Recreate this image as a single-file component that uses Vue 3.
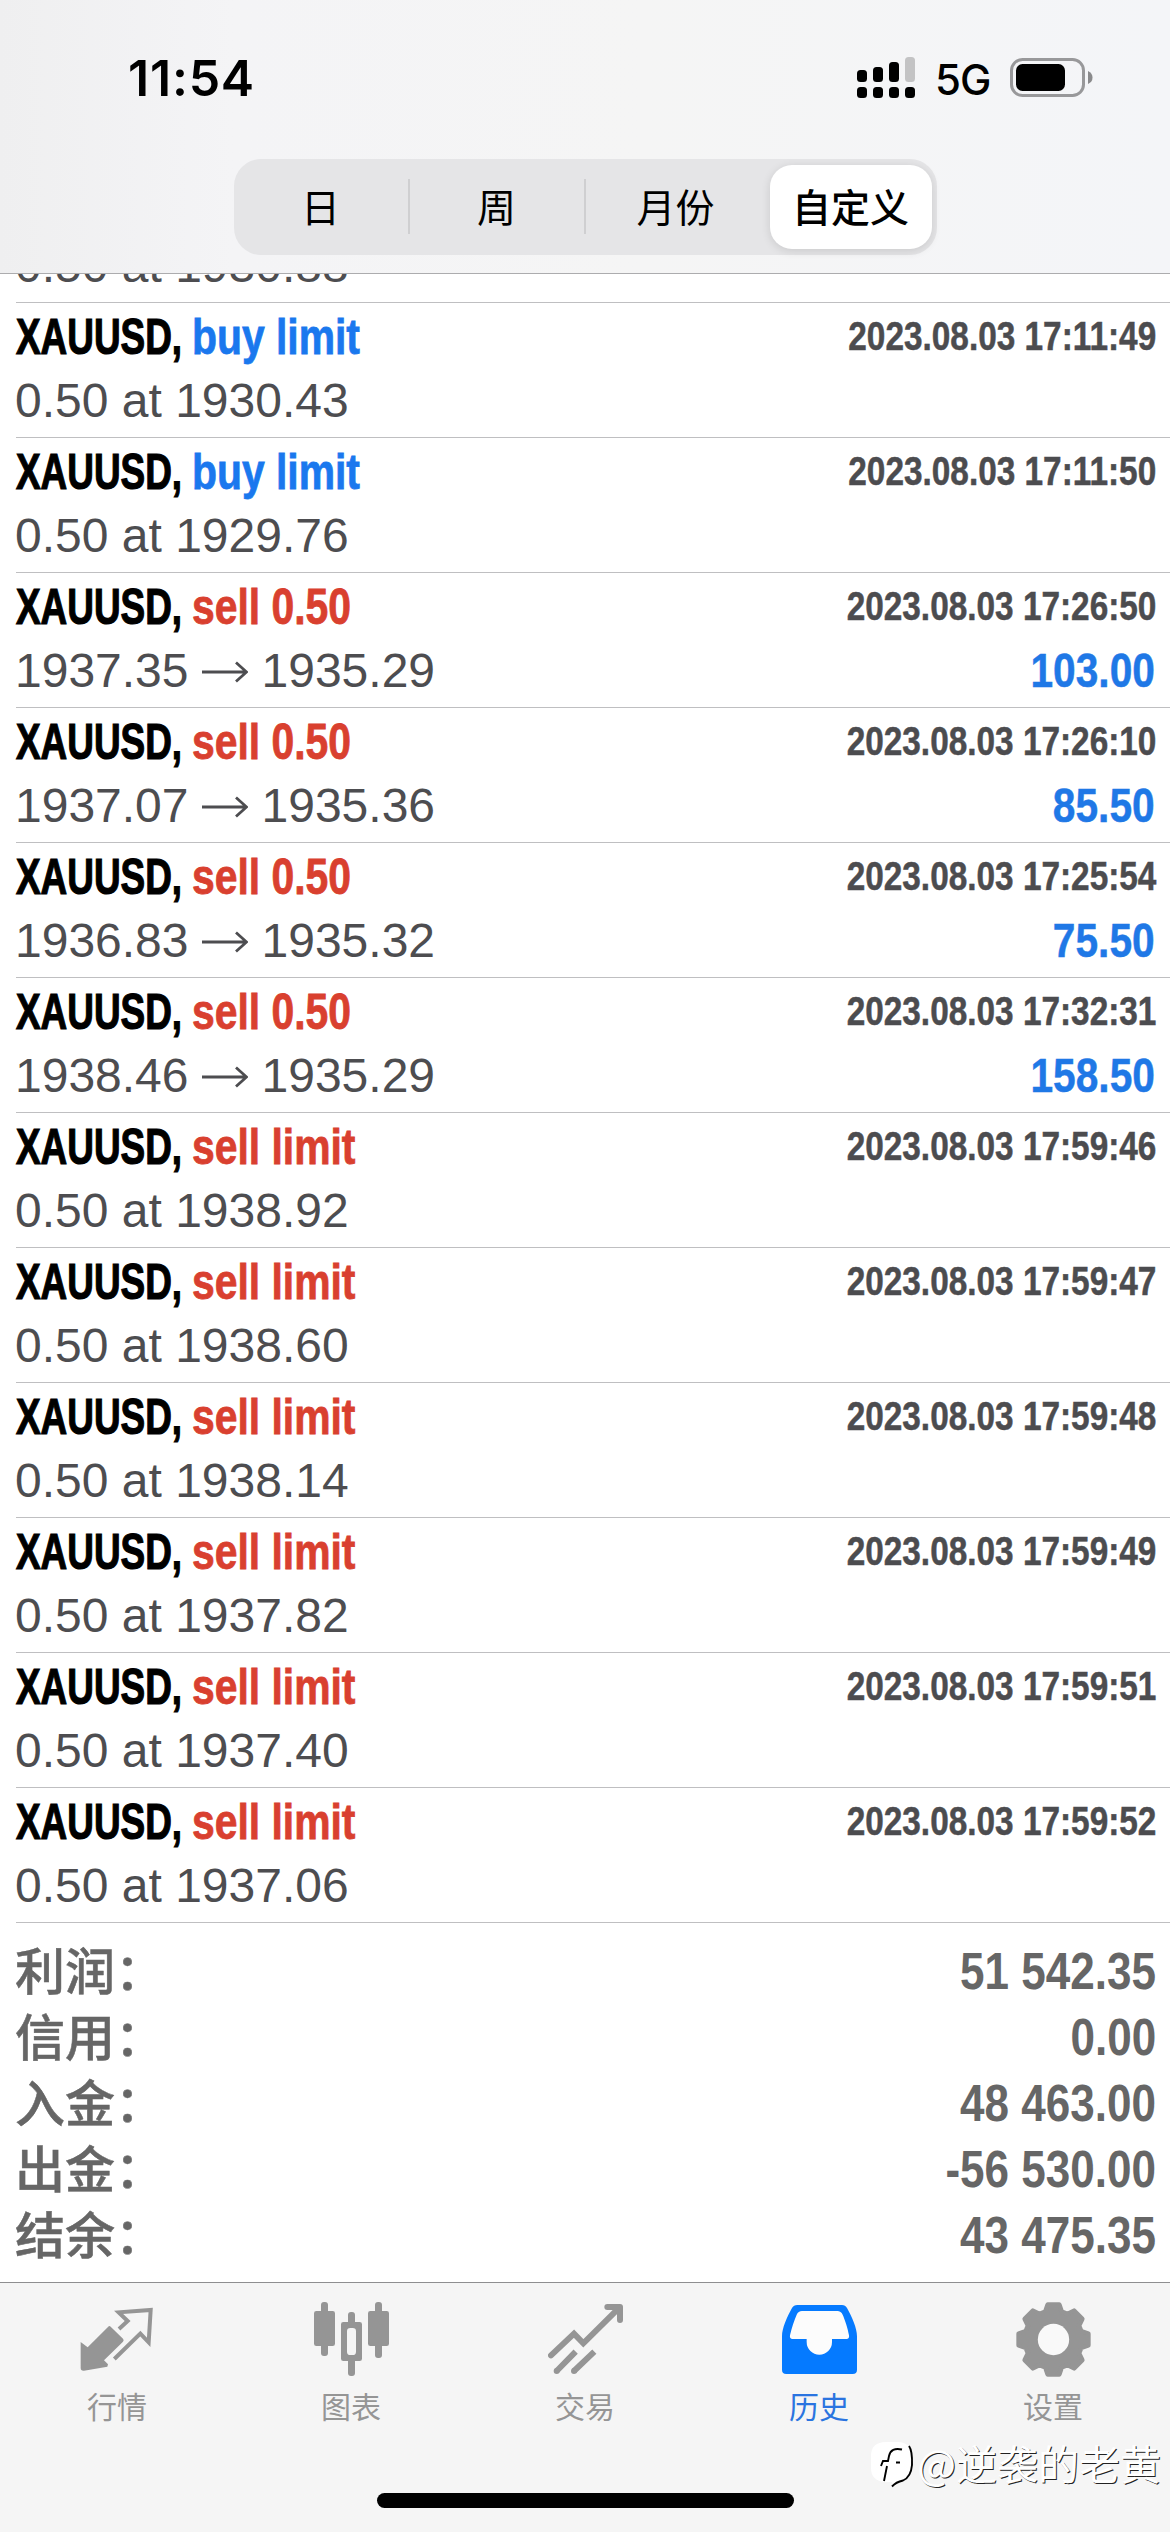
<script setup>
const periods = ['日', '周', '月份', '自定义']
const activePeriod = 3

const deals = [
  { type: 'buy limit', detail: '0.50 at 1930.88', time: '2023.08.03 17:11:48' },
  { type: 'buy limit', detail: '0.50 at 1930.43', time: '2023.08.03 17:11:49' },
  { type: 'buy limit', detail: '0.50 at 1929.76', time: '2023.08.03 17:11:50' },
  { type: 'sell 0.50', open: '1937.35', close: '1935.29', time: '2023.08.03 17:26:50', profit: '103.00' },
  { type: 'sell 0.50', open: '1937.07', close: '1935.36', time: '2023.08.03 17:26:10', profit: '85.50' },
  { type: 'sell 0.50', open: '1936.83', close: '1935.32', time: '2023.08.03 17:25:54', profit: '75.50' },
  { type: 'sell 0.50', open: '1938.46', close: '1935.29', time: '2023.08.03 17:32:31', profit: '158.50' },
  { type: 'sell limit', detail: '0.50 at 1938.92', time: '2023.08.03 17:59:46' },
  { type: 'sell limit', detail: '0.50 at 1938.60', time: '2023.08.03 17:59:47' },
  { type: 'sell limit', detail: '0.50 at 1938.14', time: '2023.08.03 17:59:48' },
  { type: 'sell limit', detail: '0.50 at 1937.82', time: '2023.08.03 17:59:49' },
  { type: 'sell limit', detail: '0.50 at 1937.40', time: '2023.08.03 17:59:51' },
  { type: 'sell limit', detail: '0.50 at 1937.06', time: '2023.08.03 17:59:52' },
]

const totals = [
  ['利润：', '51 542.35'],
  ['信用：', '0.00'],
  ['入金：', '48 463.00'],
  ['出金：', '-56 530.00'],
  ['结余：', '43 475.35'],
]

// Eight-tooth gear outline around (112.5, 112.5)
const gear = Array.from({ length: 8 }, (_, i) =>
  [[-16.5, 87], [-9.5, 106], [9.5, 106], [16.5, 87]].map(([a, r]) => {
    const t = ((i * 45 + a) * Math.PI) / 180
    return `${(112.5 + r * Math.sin(t)).toFixed(1)},${(112.5 - r * Math.cos(t)).toFixed(1)}`
  }).join(' ')
).join(' ')
</script>

<template>
  <div class="screen">
    <header class="header">
      <div class="status">
        <span class="clock">11:54</span>
        <div class="status-right">
          <svg class="signal" width="58" height="42" viewBox="0 0 58 42">
            <rect x="0" y="13" width="10" height="12" rx="3.5" />
            <rect x="16" y="10" width="10" height="15" rx="3.5" />
            <rect x="32" y="5" width="10" height="20" rx="3.5" />
            <rect x="48" y="0" width="10" height="25" rx="3.5" fill="#c3c3c4" />
            <rect v-for="x in [0, 16, 32, 48]" :key="x" :x="x" y="30" width="10" height="11" rx="3.5" />
          </svg>
          <span class="network">5G</span>
          <svg class="battery" width="83" height="39" viewBox="0 0 83 39">
            <rect x="1.5" y="1.5" width="72" height="36" rx="11" fill="none" stroke="#98989a" stroke-width="3" />
            <rect x="6" y="6" width="49" height="27" rx="6.5" />
            <path d="M78 13q4.500 2 4.500 6.500T78 26z" fill="#8a8a8c" />
          </svg>
        </div>
      </div>
      <nav class="segments">
        <div v-for="(p, i) in periods" :key="p" class="segment" :class="{ active: i === activePeriod }">
          <span>{{ p }}</span>
        </div>
      </nav>
    </header>

    <main class="content">
      <ul class="deals">
        <li v-for="d in deals" :key="d.time" class="deal">
          <div class="line top">
            <span class="symbol"><b>XAUUSD,</b></span>
            <span class="type" :class="d.type.slice(0, 4).trim()">{{ d.type }}</span>
            <time class="time">{{ d.time }}</time>
          </div>
          <div class="line bottom">
            <span v-if="d.detail" class="prices">{{ d.detail }}</span>
            <span v-else class="prices">
              <span>{{ d.open }}</span>
              <svg class="arrow" width="46" height="22" viewBox="0 0 46 22">
                <path d="M0 11H44M34 1.500 44.500 11 34 20.500" fill="none" stroke="currentColor" stroke-width="2.800" />
              </svg>
              <span>{{ d.close }}</span>
            </span>
            <span v-if="d.profit" class="profit">{{ d.profit }}</span>
          </div>
        </li>
      </ul>
      <dl class="totals">
        <div v-for="[label, value] in totals" :key="label" class="total">
          <dt>{{ label }}</dt>
          <dd>{{ value }}</dd>
        </div>
      </dl>
    </main>

    <footer class="tabbar">
      <div class="tabs">
        <div class="tab">
          <svg viewBox="0 0 225 225">
            <path d="M2 120 23 136 84 75Q88 70 92 74L129 110Q133 115 129 119L72 175 84 187 82 194 12 206Q2 207 2 198Z" fill="currentColor" />
            <path d="M117 81 143 57 116 31 212 24 206 121 181 95 103 171" fill="none" stroke="currentColor" stroke-width="12" />
          </svg>
          <span>行情</span>
        </div>
        <div class="tab">
          <svg viewBox="0 0 225 225" fill="currentColor">
            <rect x="21" y="0" width="21" height="162" rx="9" />
            <rect x="0" y="27" width="63" height="105" rx="7" />
            <rect x="183" y="0" width="21" height="168" rx="9" />
            <rect x="162" y="27" width="63" height="105" rx="7" />
            <rect x="102" y="30" width="21" height="45" rx="9" />
            <rect x="102" y="165" width="21" height="57" rx="9" />
            <path fill-rule="evenodd" d="M88 60H137Q144 60 144 67V170Q144 177 137 177H88Q81 177 81 170V67Q81 60 88 60ZM109 78Q99 78 99 88V149Q99 159 109 159H116Q126 159 126 149V88Q126 78 116 78Z" />
          </svg>
          <span>图表</span>
        </div>
        <div class="tab">
          <svg viewBox="0 0 225 225" fill="none" stroke="currentColor" stroke-width="18">
            <path d="M9 160 78 95 106 124 214 17" stroke-linecap="round" />
            <path d="M178 15H216V54" stroke-linecap="round" stroke-linejoin="round" />
            <path d="M83 149 26 207M139 149 78 207" />
            <circle cx="26" cy="207" r="9" fill="currentColor" stroke="none" />
            <circle cx="78" cy="207" r="9" fill="currentColor" stroke="none" />
          </svg>
          <span>交易</span>
        </div>
        <div class="tab current">
          <svg viewBox="0 0 225 225">
            <path d="M46 9H180Q190 9 195 18C210 45 225 78 225 103V203Q225 216 212 216H13Q0 216 0 203V103C0 78 15 45 30 18Q35 9 46 9Z" fill="currentColor" />
            <path d="M60 27H166Q177 27 182 38C189 54 197 78 201 100Q203 111 193 111H150V120A38 38 0 0 1 74 120V111H32Q22 111 24 100C29 78 37 54 44 38Q49 27 60 27Z" fill="#fcfcfc" />
          </svg>
          <span>历史</span>
        </div>
        <div class="tab">
          <svg viewBox="0 0 225 225">
            <polygon :points="gear" fill="currentColor" stroke="currentColor" stroke-width="14" stroke-linejoin="round" />
            <circle cx="112.500" cy="112.500" r="47" fill="#f9f9f9" />
          </svg>
          <span>设置</span>
        </div>
      </div>
      <div class="home-indicator"></div>
      <div class="watermark">
        <svg width="44" height="48" viewBox="0 0 44 48">
          <path d="M15 1H27Q40 1 40 15V26Q40 38 29 41L22 46 21 41H14Q0 40 0 27V15Q0 1 15 1Z" fill="#fff" />
          <path d="M38 5Q41.500 10 41 24 40 36 32 39.500 25 41 21 45.500M31 8.500Q20 6 18 15L17 20H12L10 25M16 25 13 40M25 21.500H29" fill="none" stroke="#000" stroke-width="1.900" />
        </svg>
        <span>@逆袭的老黄</span>
      </div>
    </footer>
  </div>
</template>

<style>
body {
  margin: 0;
}
</style>

<style scoped>
.screen {
  width: 1170px;
  height: 2532px;
  display: flex;
  flex-direction: column;
  overflow: hidden;
  background: #fff;
  font-family: 'Liberation Sans', 'Noto Sans CJK SC', sans-serif;
}
.header {
  box-sizing: border-box;
  flex: none;
  height: 274px;
  border-bottom: 1px solid #acacae;
  background: linear-gradient(90deg, #efeff0, #f4f4f6 20%, #f5f5f5 55%, #f4f5f8);
}
.status {
  height: 159px;
  display: flex;
  justify-content: space-between;
  padding: 0 77px 0 128px;
}
.clock {
  font: 600 50px/157px Inter, sans-serif;
  letter-spacing: 0.8px;
}
.status-right {
  display: flex;
  align-items: flex-start;
}
.signal {
  margin-top: 57px;
}
.network {
  width: 75px;
  margin-left: 20px;
  font: 500 42px/160px Inter, sans-serif;
  letter-spacing: -1px;
}
.battery {
  margin-top: 58px;
}
.segments {
  box-sizing: border-box;
  width: 703px;
  height: 96px;
  margin: 0 auto;
  padding: 6px 5px 6px 0;
  display: flex;
  border-radius: 27px;
  background: #e5e5e7;
}
.segment {
  width: 174px;
  display: flex;
  align-items: center;
  justify-content: center;
  border-right: 2px solid transparent;
  border-image: linear-gradient(transparent 18%, #cfcfd1 18%, #cfcfd1 81%, transparent 81%) 1;
  font: 400 39px/58px 'Noto Sans CJK SC', sans-serif;
}
.segment span {
  margin-bottom: 4px;
}
.segment:nth-child(3) {
  border-image: none;
}
.segment:nth-child(3) span {
  margin-left: 6px;
}
.segment.active {
  width: 162px;
  margin-left: auto;
  border: 0;
  border-radius: 22px;
  background: #fff;
  box-shadow: 0 2px 10px rgba(0, 0, 0, 0.12);
  font-weight: 500;
}
.content {
  flex: none;
  height: 2008px;
  overflow: hidden;
}
.deals {
  margin: -106px 0 0 16px;
  padding: 0;
  list-style: none;
}
.deal {
  box-sizing: border-box;
  height: 135px;
  padding: 4px 14px 0 0;
  border-bottom: 1px solid #bfbfc1;
  white-space: nowrap;
}
.line {
  display: flex;
}
.top {
  height: 60px;
  font: 700 50px/60px 'Liberation Sans', sans-serif;
}
.symbol {
  width: 176px;
  color: #000;
}
.symbol b {
  display: inline-block;
  transform: scaleX(0.738);
  transform-origin: left;
  -webkit-text-stroke: 1.2px;
}
.type {
  transform: scaleX(0.817);
  transform-origin: left;
  -webkit-text-stroke: 0.8px;
}
.buy {
  color: #1a78ee;
}
.sell {
  color: #d9402f;
}
.time {
  margin-left: auto;
  font-size: 40px;
  line-height: 59px;
  color: #4c4c4f;
  transform: scaleX(0.834);
  transform-origin: right;
  -webkit-text-stroke: 0.5px;
}
.bottom {
  height: 56px;
  margin: 6px 1px 0 -1px;
  justify-content: space-between;
  font: 400 48px/56px 'Liberation Sans', sans-serif;
}
.prices {
  display: flex;
  align-items: center;
  color: #4d4d50;
}
.arrow {
  margin: 2px 14px 0 13px;
}
.profit {
  font-size: 49px;
  line-height: 55px;
  font-weight: 700;
  color: #1f78e6;
  transform: scaleX(0.83);
  transform-origin: right;
  -webkit-text-stroke: 0.5px;
}
.totals {
  margin: 0;
  padding: 16px 14px 0 15px;
  color: #666;
}
.total {
  height: 66px;
  display: flex;
  justify-content: space-between;
}
.total dt {
  font: 500 50px/58px 'Noto Sans CJK SC', sans-serif;
  -webkit-text-stroke: 0.5px;
}
.total dd {
  margin: 0;
  font: 700 51px/66px 'Liberation Sans', sans-serif;
  transform: scaleX(0.863);
  transform-origin: right;
}
.tabbar {
  box-sizing: border-box;
  flex: 1;
  position: relative;
  display: flex;
  flex-direction: column;
  align-items: center;
  border-top: 1px solid #8e8e90;
  background: #f5f5f5;
}
.tabs {
  width: 100%;
  height: 210px;
  display: flex;
}
.tab {
  flex: 1;
  display: flex;
  flex-direction: column;
  align-items: center;
  padding-top: 19px;
  color: #959595;
}
.tab svg {
  width: 75px;
  height: 75px;
}
.tab span {
  margin-top: 7px;
  font: 400 30px/42px 'Noto Sans CJK SC', sans-serif;
}
.tab.current {
  color: #057aff;
}
.tab.current span {
  color: #2a74e0;
}
.home-indicator {
  width: 417px;
  height: 15px;
  border-radius: 8px;
  background: #000;
}
.watermark {
  position: absolute;
  right: 9px;
  bottom: 40px;
  display: flex;
  align-items: flex-start;
  color: #fff;
  font: 400 41px/60px 'Noto Sans CJK SC', sans-serif;
  text-shadow: 1px 1px 0 #222;
}
.watermark span {
  margin-top: -9px;
}
.watermark svg {
  margin: 0 2px 0 0;
}
</style>
